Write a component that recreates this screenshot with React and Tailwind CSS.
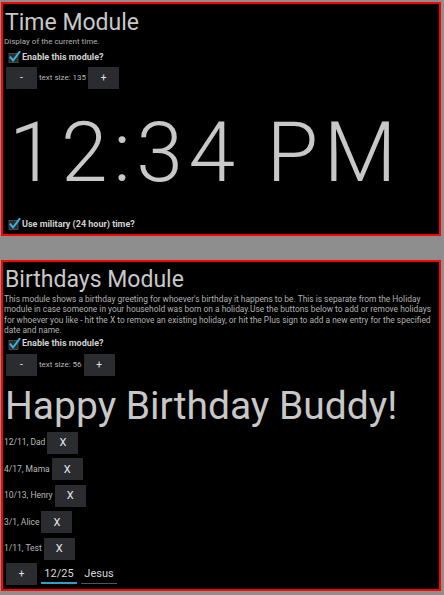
import React from "react";

const font = { fontFamily: "Roboto, 'Noto Sans', sans-serif" };

function Check() {
  return (
    <svg width="13" height="12" viewBox="0 0 13 12" className="shrink-0">
      <rect x="1" y="2.5" width="9" height="9" fill="#2a2a2a" stroke="#555" strokeWidth="0.8" />
      <path d="M2.5 6.5 L5 9.5 L11.5 1" fill="none" stroke="#33b5e5" strokeWidth="2" strokeLinecap="square" />
    </svg>
  );
}

function CheckRow({ label, className = "" }) {
  return (
    <div className={"flex items-center h-[14px] pl-[5px] gap-[1px] " + className}>
      <Check />
      <span className="text-[9px] font-bold text-[#d0d0d0] leading-none">{label}</span>
    </div>
  );
}

function Btn({ children, className = "" }) {
  return (
    <div className={"w-[31px] h-[22px] bg-[#2a2c2f] flex items-center justify-center text-[#e8e8e8] text-[10px] leading-none shrink-0 " + className}>
      {children}
    </div>
  );
}

function SizeRow({ size, className = "" }) {
  return (
    <div className={"flex items-center h-[22px] pl-[3px] gap-[2px] " + className}>
      <Btn>-</Btn>
      <span className="text-[8px] text-[#b8b8b8] leading-none">text size: {size}</span>
      <Btn>+</Btn>
    </div>
  );
}

function Entry({ label }) {
  return (
    <div className="flex items-center h-[22px] gap-[2px]">
      <span className="text-[8.5px] text-[#b8b8b8] leading-none pl-[1px] whitespace-pre">{label}</span>
      <Btn className="text-[11px]">X</Btn>
    </div>
  );
}

export default function App() {
  return (
    <div className="w-[444px] h-[595px] bg-[#8e8e8e] overflow-hidden" style={font}>
      <div className="ml-[1px] mt-[2px] w-[440px] h-[234px] border-2 border-[#ff0000] bg-black flex flex-col">
        <div className="pt-[4px] pl-[2px] text-[23px] leading-[29px] text-[#c8c8c8]">Time Module</div>
        <div className="pl-[1px] text-[8px] leading-[10px] text-[#b0b0b0]">Display of the current time.</div>
        <CheckRow label="Enable this module?" className="mt-[3px]" />
        <SizeRow size="135" className="mt-[3px]" />
        <div className="mt-[22px] pl-[6px] text-[84px] leading-none font-light tracking-[5.5px] text-[#c8c8c8] whitespace-nowrap">12:34 PM</div>
        <CheckRow label="Use military (24 hour) time?" className="mt-auto mb-[3px]" />
      </div>
      <div className="ml-[1px] mt-[24px] w-[440px] h-[331px] border-2 border-[#ff0000] bg-black flex flex-col">
        <div className="pt-[4px] pl-[2px] text-[23px] leading-[28px] text-[#c8c8c8]">Birthdays Module</div>
        <div className="pl-[1px] text-[8.4px] leading-[10.4px] text-[#b0b0b0] whitespace-nowrap">
          This module shows a birthday greeting for whoever's birthday it happens to be. This is separate from the Holiday<br />
          module in case someone in your household was born on a holiday.Use the buttons below to add or remove holidays<br />
          for whoever you like - hit the X to remove an existing holiday, or hit the Plus sign to add a new entry for the specified<br />
          date and name.
        </div>
        <CheckRow label="Enable this module?" className="mt-[1px]" />
        <SizeRow size="56" className="mt-[3px]" />
        <div className="mt-[7px] pl-[2px] text-[39px] leading-[46px] text-[#c8c8c8] whitespace-nowrap">Happy Birthday Buddy!</div>
        <div className="flex flex-col gap-[4.5px] mt-[3px]">
          <Entry label="12/11, Dad" />
          <Entry label="4/17, Mama" />
          <Entry label="10/13, Henry" />
          <Entry label="3/1, Alice" />
          <Entry label="1/11, Test" />
        </div>
        <div className="flex items-center h-[23px] pl-[3px] gap-[4px] mt-[3px]">
          <Btn>+</Btn>
          <div className="w-[36px] h-[20px] flex items-center justify-center text-[11px] text-[#d8d8d8] border-b-2 border-[#2f9ec8] leading-none">12/25</div>
          <div className="w-[36px] h-[20px] flex items-center justify-center text-[11px] text-[#d8d8d8] border-b border-[#555] leading-none">Jesus</div>
        </div>
      </div>
    </div>
  );
}
